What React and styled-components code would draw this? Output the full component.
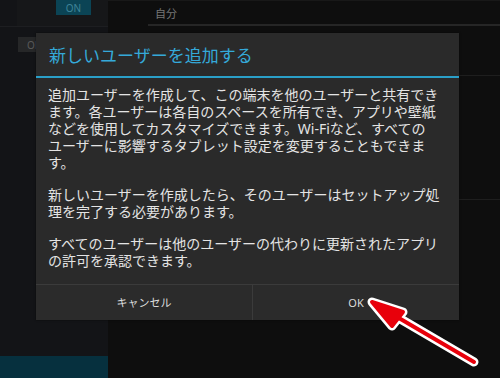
import React from "react";
import styled, { createGlobalStyle } from "styled-components";

const Global = createGlobalStyle`
	html, body{
		margin:0;
		padding:0;
		background:#0e0e0e;
	}
	*{
		box-sizing:border-box;
	}
`;

const Screen = styled.div`
	width:500px;
	height:378px;
	position:relative;
	overflow:hidden;
	display:grid;
	grid-template-columns:108px 1fr;
	background-color:#0e0e0e;
	font-family:"Noto Sans", "Noto Sans CJK JP", sans-serif;
`;

const LeftPanel = styled.div`
	display:flex;
	flex-direction:column;
	background-color:#131417;
`;

const ToggleRow = styled.div`
	height:${(p) => p.$h}px;
	padding-left:${(p) => p.$pl}px;
	padding-top:${(p) => p.$pt || 0}px;
	border-bottom:${(p) => (p.$line ? "1px solid #1d1e21" : "0")};
	display:flex;
	align-items:flex-start;
`;

const ToggleBox = styled.div`
	width:91px;
	height:26px;
	background-color:#161719;
	padding-left:39px;
`;

const Toggle = styled.div`
	width:${(p) => p.$w}px;
	height:15px;
	display:flex;
	align-items:center;
	justify-content:${(p) => (p.$on ? "center" : "flex-start")};
	padding-left:${(p) => (p.$on ? 0 : 9)}px;
	font-size:10px;
	color:${(p) => (p.$on ? "#3f8598" : "#5a5a5a")};
	background-color:${(p) => (p.$on ? "#0b4455" : "#262728")};
`;

const Spacer = styled.div`
	flex:1;
`;

const Selected = styled.div`
	height:22px;
	background-color:#06303e;
`;

const RightPanel = styled.div`
	display:flex;
	flex-direction:column;
	border-top:1px solid #181818;
`;

const Header = styled.div`
	height:25px;
	margin-left:40px;
	padding-left:7px;
	display:flex;
	align-items:center;
	font-size:11px;
	color:#767676;
	border-bottom:2px solid #262626;
`;

const ListRow = styled.div`
	height:${(p) => p.$h}px;
	border-bottom:1px solid #1e1e1e;
`;

const Dialog = styled.div`
	position:absolute;
	left:36px;
	top:33px;
	width:423px;
	height:287px;
	display:flex;
	flex-direction:column;
	background-color:#2a2a2a;
	box-shadow:0 0 2px rgba(0,0,0,0.6);
`;

const Title = styled.div`
	height:52px;
	padding-left:13px;
	display:flex;
	align-items:center;
	font-size:17px;
	color:#35a9d9;
	border-bottom:2px solid #2a9fc8;
`;

const Body = styled.div`
	flex:1;
	padding:8px 0 0 12px;
	p{
		margin:0 0 15px;
		font-size:14px;
		line-height:17px;
		color:#e4e4e4;
		white-space:nowrap;
	}
`;

const Buttons = styled.div`
	height:42px;
	display:grid;
	grid-template-columns:216px 1fr;
	border-top:1px solid #3b3b3b;
	background-color:#2b2b2b;
`;

const Button = styled.div`
	display:flex;
	align-items:center;
	justify-content:center;
	font-size:11px;
	color:#dcdcdc;
	border-left:${(p) => (p.$divider ? "1px solid #3b3b3b" : "0")};
`;

const Arrow = styled.svg`
	position:absolute;
	left:0;
	top:0;
	pointer-events:none;
`;

const App = () => {
	return (
		<>
			<Global />
			<Screen>
				<LeftPanel>
					<ToggleRow $h={27} $pl={17} $line>
						<ToggleBox>
							<Toggle $on $w={35}>ON</Toggle>
						</ToggleBox>
					</ToggleRow>
					<ToggleRow $h={30} $pl={18} $pt={10}>
						<Toggle $w={40}>OFF</Toggle>
					</ToggleRow>
					<Spacer />
					<Selected />
				</LeftPanel>

				<RightPanel>
					<Header>自分</Header>
					<ListRow $h={50} />
					<ListRow $h={124} />
				</RightPanel>

				<Dialog>
					<Title>新しいユーザーを追加する</Title>
					<Body>
						<p>
							追加ユーザーを作成して、この端末を他のユーザーと共有でき<br />
							ます。各ユーザーは各自のスペースを所有でき、アプリや壁紙<br />
							などを使用してカスタマイズできます。Wi-Fiなど、すべての<br />
							ユーザーに影響するタブレット設定を変更することもできま<br />
							す。
						</p>
						<p>
							新しいユーザーを作成したら、そのユーザーはセットアップ処<br />
							理を完了する必要があります。
						</p>
						<p>
							すべてのユーザーは他のユーザーの代わりに更新されたアプリ<br />
							の許可を承認できます。
						</p>
					</Body>
					<Buttons>
						<Button>キャンセル</Button>
						<Button $divider>OK</Button>
					</Buttons>
				</Dialog>

				<Arrow width="500" height="378" viewBox="0 0 500 378">
					<g stroke="#ffffff" strokeWidth="9" strokeLinejoin="round" strokeLinecap="round" fill="#ffffff">
						<line x1="474" y1="362" x2="392" y2="314" />
						<polygon points="372,302 403,312 392,326" />
					</g>
					<g stroke="#e8000b" strokeWidth="4" strokeLinejoin="round" strokeLinecap="round" fill="#e8000b">
						<line x1="474" y1="362" x2="392" y2="314" />
						<polygon points="372,302 403,312 392,326" />
					</g>
				</Arrow>
			</Screen>
		</>
	);
};

export default App;
